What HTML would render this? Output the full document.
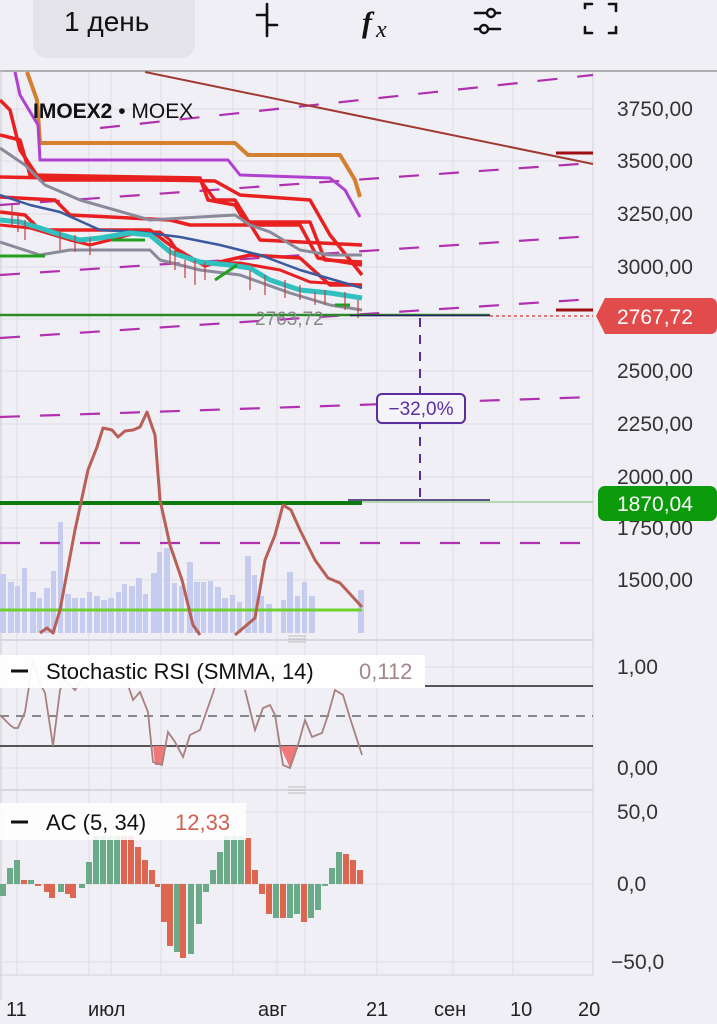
<!DOCTYPE html>
<html><head><meta charset="utf-8">
<style>
html,body{margin:0;padding:0;background:#f0eff5;width:717px;height:1024px;overflow:hidden;font-family:"Liberation Sans","DejaVu Sans",sans-serif;}
svg{position:absolute;left:0;top:0}
</style></head><body>
<svg width="717" height="1024" viewBox="0 0 717 1024" xmlns="http://www.w3.org/2000/svg" font-family="Liberation Sans, DejaVu Sans, sans-serif">
<rect width="717" height="1024" fill="#f0eff5"/>
<!-- top bar -->
<rect x="33" y="-12" width="162" height="70" rx="14" fill="#e4e3e9"/>
<text x="64" y="31" font-size="28" fill="#111">1 день</text>
<g stroke="#111" stroke-width="2.6" fill="none" stroke-linecap="round">
<path d="M257 15 H267 M267 4 V36 M267 25 H277"/>
<path d="M475 13 H500 M475 29 H500"/>
<path d="M585 8 V4 H592 M609 4 H616 V11 M585 27 V33 H592 M609 33 H616 V27"/>
</g>
<circle cx="491" cy="13" r="4" fill="#f0eff5" stroke="#111" stroke-width="2.4"/>
<circle cx="484" cy="29" r="4" fill="#f0eff5" stroke="#111" stroke-width="2.4"/>
<text x="362" y="32" font-size="30" font-style="italic" font-family="Liberation Serif, serif" font-weight="bold" fill="#111">f</text>
<text x="376" y="37" font-size="24" font-style="italic" font-family="Liberation Serif, serif" fill="#111">x</text>
<line x1="0" y1="71" x2="717" y2="71" stroke="#999" stroke-width="1.5"/>
<line x1="1" y1="71" x2="1" y2="1000" stroke="#ccc"/>

<!-- grid -->
<g stroke="#dcdce3" stroke-width="1">
<path d="M17 72V975 M89 72V975 M111 72V975 M161 72V975 M233 72V975 M277 72V975 M305 72V975 M377 72V975 M453 72V975 M513 72V975"/>
<path d="M0 109H593 M0 161H593 M0 214H593 M0 267H593 M0 319H593 M0 371H593 M0 424H593 M0 477H593 M0 528H593 M0 580H593"/>
<path d="M0 667H593 M0 768H593 M0 812H593 M0 884H593 M0 962H593"/>
</g>
<path d="M593 72V975 M0 975H593" stroke="#d0d0d6"/>
<path d="M0 640H593 M0 790H593" stroke="#cfcfd5" stroke-width="1.5"/>
<path d="M288 636H306 M288 639H306 M288 642H306 M288 787H306 M288 790H306 M288 793H306" stroke="#bbb"/>

<!-- volume -->
<g fill="#c6cbf0">
<rect x="0" y="574" width="6" height="59"/><rect x="8" y="582" width="6" height="51"/><rect x="15" y="586" width="5" height="47"/><rect x="22" y="568" width="5" height="65"/><rect x="30" y="592" width="6" height="41"/><rect x="37" y="598" width="5" height="35"/><rect x="44" y="588" width="6" height="45"/><rect x="51" y="571" width="5" height="62"/><rect x="58" y="522" width="5" height="111"/><rect x="65" y="594" width="6" height="39"/><rect x="72" y="598" width="6" height="35"/><rect x="80" y="598" width="5" height="35"/><rect x="87" y="592" width="5" height="41"/><rect x="94" y="596" width="6" height="37"/><rect x="101" y="600" width="6" height="33"/><rect x="108" y="598" width="6" height="35"/><rect x="116" y="592" width="5" height="41"/><rect x="122" y="584" width="5" height="49"/><rect x="129" y="586" width="6" height="47"/><rect x="136" y="578" width="6" height="55"/><rect x="143" y="594" width="5" height="39"/><rect x="151" y="573" width="6" height="60"/><rect x="157" y="552" width="5" height="81"/><rect x="164" y="548" width="6" height="85"/><rect x="172" y="583" width="5" height="50"/><rect x="179" y="586" width="5" height="47"/><rect x="187" y="562" width="6" height="71"/><rect x="194" y="582" width="6" height="51"/><rect x="201" y="582" width="5" height="51"/><rect x="208" y="581" width="5" height="52"/><rect x="215" y="587" width="6" height="46"/><rect x="222" y="598" width="6" height="35"/><rect x="230" y="595" width="5" height="38"/><rect x="237" y="602" width="5" height="31"/><rect x="245" y="556" width="6" height="77"/><rect x="252" y="575" width="5" height="58"/><rect x="259" y="596" width="5" height="37"/><rect x="266" y="604" width="6" height="29"/><rect x="281" y="600" width="5" height="33"/><rect x="287" y="572" width="6" height="61"/><rect x="295" y="596" width="5" height="37"/><rect x="302" y="582" width="5" height="51"/><rect x="309" y="596" width="6" height="37"/><rect x="358" y="590" width="6" height="43"/>
</g>

<!-- channel dashed -->
<g stroke="#b030b0" stroke-width="2.2" stroke-dasharray="20 20" fill="none">
<path d="M100 128 L593 75"/>
<path d="M0 205 L593 163"/>
<path d="M0 275 L593 236"/>
<path d="M0 338 L593 299"/>
<path d="M0 417 L593 397"/>
<path d="M0 543 H593"/>
</g>
<path d="M145 72 L593 164" stroke="#a03a30" stroke-width="2" fill="none"/>
<path d="M556 153H593 M556 310H593" stroke="#a01010" stroke-width="3"/>

<!-- price lines -->
<g fill="none" stroke-linejoin="round">
<path d="M27 72 L37 100 L40 143 L235 143 L248 155 L340 155 L355 180 L360 197" stroke="#d48030" stroke-width="4"/>
<path d="M15 72 L20 95 L38 125 L40 160 L228 160 L240 175 L330 178 L345 190 L360 217" stroke="#b040d0" stroke-width="3"/>
<path d="M0 100 L10 110 L20 150 L40 180 L200 180 L215 200 L235 200 L260 240 L362 245" stroke="#e82020" stroke-width="3.5"/>
<path d="M0 135 L20 140 L30 175 L200 178 L208 200 L235 205 L245 222 L310 222 L325 260 L362 262" stroke="#e82020" stroke-width="3.5"/>
<path d="M0 177 L215 181 L240 195 L310 200 L330 235 L362 275" stroke="#e82020" stroke-width="3.5"/>
<path d="M0 197 L55 200 L70 215 L170 220 L190 225 L300 225 L318 258 L362 265" stroke="#e82020" stroke-width="3.5"/>
<path d="M0 212 L25 215 L40 230 L150 230 L170 245 L195 260 L205 266 L215 263 L250 255 L300 258 L330 285 L362 285" stroke="#e82020" stroke-width="3.5"/>
<path d="M0 225 L30 228 L70 240 L90 245 L110 240 L140 232 L160 232 L170 240 L180 255 L195 262 L240 263 L280 270 L310 282 L362 285" stroke="#e82020" stroke-width="3"/>
<path d="M0 148 L25 165 L45 185 L80 200 L150 220 L200 217 L235 215 L250 225 L270 232 L300 250 L330 255 L362 255" stroke="#8a8a9a" stroke-width="3"/>
<path d="M0 242 L40 255 L70 250 L120 250 L150 250 L160 260 L200 270 L240 275 L290 293 L330 305 L362 310" stroke="#8a8a9a" stroke-width="3"/>
<path d="M0 195 L30 205 L60 212 L100 230 L140 232 L180 237 L220 245 L260 255 L300 270 L362 288" stroke="#3a5aa0" stroke-width="2.5"/>
<path d="M0 220 L20 222 L40 228 L55 233 L80 240 L100 238 L130 233 L150 235 L170 252 L200 262 L230 265 L250 268 L270 280 L300 290 L330 293 L362 298" stroke="#30c0c0" stroke-width="5"/>
<path d="M111 240 H145 M215 280 L237 265 M0 256 H45 M335 305H350" stroke="#20a020" stroke-width="3"/>
</g>
<g stroke="#c04040" stroke-width="1.2" fill="none">
<path d="M12 205V225 M18 215V232 M25 220V240 M60 230V250 M75 235V252 M90 238V255 M170 245V265 M175 250V270 M185 260V278 M195 260V285 M205 262V280 M250 270V290 M265 275V295 M285 280V298 M300 285V300 M315 292V305 M325 290V305 M345 292V310 M358 300V318"/>
</g>
<path d="M0 315 H490" stroke="#2a8a2a" stroke-width="2.5"/>
<path d="M350 315.5 H490" stroke="#2a2060" stroke-width="1.5"/>
<path d="M490 316 H593" stroke="#e05050" stroke-width="1.5" stroke-dasharray="3 3"/>
<text x="255" y="325" font-size="19" fill="#888">2763,72</text>
<text x="33" y="118" font-size="21" fill="#111"><tspan font-weight="bold">IMOEX2</tspan> • MOEX</text>

<!-- green levels -->
<path d="M0 503 H362" stroke="#0d7a0d" stroke-width="4"/>
<path d="M362 502 H593" stroke="#9fcf9f" stroke-width="1.5"/>
<path d="M348 500 H490" stroke="#2a2060" stroke-width="1.5"/>
<path d="M0 610 H362" stroke="#70d030" stroke-width="3"/>
<path d="M40 633 L47 628 L53 633 L60 610 L75 530 L88 470 L97 447 L103 428 L112 430 L118 437 L125 431 L133 430 L140 427 L147 412 L155 435 L160 500 L170 545 L182 580 L193 625 L200 635 M235 635 L255 618 L265 560 L275 535 L283 505 L291 510 L300 530 L315 560 L328 578 L340 583 L362 607" fill="none" stroke="#b86058" stroke-width="3" stroke-linejoin="round"/>
<path d="M420 318 V500" stroke="#5a2ea0" stroke-width="2" stroke-dasharray="9 8"/>
<rect x="377" y="394" width="88" height="29" rx="5" fill="#f5f4f9" stroke="#5a2ea0" stroke-width="2"/>
<text x="421" y="415" font-size="19" fill="#5a2ea0" text-anchor="middle">−32,0%</text>

<!-- price axis -->
<g font-size="21" fill="#333">
<text x="617" y="116">3750,00</text><text x="617" y="168">3500,00</text><text x="617" y="221">3250,00</text><text x="617" y="274">3000,00</text><text x="617" y="378">2500,00</text><text x="617" y="431">2250,00</text><text x="617" y="484">2000,00</text><text x="617" y="535">1750,00</text><text x="617" y="587">1500,00</text>
<text x="617" y="674">1,00</text><text x="617" y="775">0,00</text>
<text x="617" y="819">50,0</text><text x="617" y="891">0,0</text><text x="611" y="969">−50,0</text>
</g>
<path d="M605 298 H710 Q717 298 717 305 V327 Q717 334 710 334 H605 L596 316 Z" fill="#e24b4b"/>
<text x="617" y="324" font-size="21" fill="#fff">2767,72</text>
<rect x="598" y="486" width="119" height="35" rx="7" fill="#0a9a0a"/>
<text x="617" y="511" font-size="21" fill="#fff">1870,04</text>

<!-- stoch pane -->
<path d="M0 716 H593" stroke="#666" stroke-width="1.5" stroke-dasharray="9 7"/>
<path d="M0 746 H593 M425 686 H593" stroke="#222" stroke-width="1.5"/>
<path d="M153 746 L155 765 L162 765 L165 746Z M280 746 L290 768 L297 746Z" fill="#f07878"/>
<path d="M0 715 L5 720 L10 725 L14 728 L18 728 L25 712 L30 680 L33 660 L40 683 L45 693 L53 746 L60 690 L65 680 L75 690 L90 665 M128 685 L133 700 L140 692 L148 712 L153 762 L162 765 L168 732 L175 742 L183 757 L190 735 L200 730 L207 710 L213 693 L220 670 M245 690 L255 730 L263 708 L270 705 L275 715 L283 765 L290 768 L298 745 L305 720 L312 737 L322 733 L328 715 L335 690 L343 695 L350 718 L362 755" fill="none" stroke="#a88080" stroke-width="1.8"/>
<rect x="0" y="655" width="425" height="33" fill="#fff" opacity="0.93"/>
<path d="M11 671 H28" stroke="#111" stroke-width="3"/>
<text x="46" y="679" font-size="22" fill="#111">Stochastic RSI (SMMA, 14)</text>
<text x="359" y="679" font-size="22" fill="#a08888">0,112</text>

<!-- AC bars -->
<g>
<rect x="0" y="884" width="6" height="12" fill="#6aaa88"/><rect x="7" y="868" width="6" height="16" fill="#6aaa88"/><rect x="14" y="860" width="6" height="24" fill="#6aaa88"/><rect x="21" y="880" width="6" height="4" fill="#dd6650"/><rect x="28" y="880" width="6" height="4" fill="#6aaa88"/><rect x="35" y="884" width="6" height="2" fill="#dd6650"/><rect x="44" y="884" width="6" height="8" fill="#dd6650"/><rect x="49" y="884" width="6" height="14" fill="#dd6650"/><rect x="58" y="884" width="6" height="8" fill="#6aaa88"/><rect x="65" y="884" width="6" height="10" fill="#dd6650"/><rect x="70" y="884" width="6" height="14" fill="#dd6650"/><rect x="79" y="884" width="6" height="4" fill="#6aaa88"/><rect x="86" y="862" width="6" height="22" fill="#6aaa88"/><rect x="93" y="836" width="6" height="48" fill="#6aaa88"/><rect x="100" y="836" width="6" height="48" fill="#6aaa88"/><rect x="107" y="836" width="6" height="48" fill="#6aaa88"/><rect x="114" y="836" width="6" height="48" fill="#6aaa88"/><rect x="121" y="836" width="6" height="48" fill="#dd6650"/><rect x="128" y="836" width="6" height="48" fill="#dd6650"/><rect x="135" y="847" width="6" height="37" fill="#dd6650"/><rect x="142" y="860" width="6" height="24" fill="#dd6650"/><rect x="149" y="870" width="6" height="14" fill="#dd6650"/><rect x="155" y="884" width="5" height="3" fill="#dd6650"/><rect x="161" y="884" width="6" height="38" fill="#dd6650"/><rect x="167" y="884" width="6" height="62" fill="#dd6650"/><rect x="174" y="884" width="6" height="68" fill="#6aaa88"/><rect x="180" y="884" width="6" height="74" fill="#dd6650"/><rect x="188" y="884" width="6" height="70" fill="#6aaa88"/><rect x="196" y="884" width="6" height="40" fill="#6aaa88"/><rect x="203" y="884" width="6" height="8" fill="#6aaa88"/><rect x="210" y="870" width="6" height="14" fill="#6aaa88"/><rect x="217" y="852" width="6" height="32" fill="#6aaa88"/><rect x="224" y="836" width="6" height="48" fill="#6aaa88"/><rect x="231" y="836" width="6" height="48" fill="#6aaa88"/><rect x="238" y="836" width="6" height="48" fill="#6aaa88"/><rect x="245" y="838" width="6" height="46" fill="#dd6650"/><rect x="252" y="870" width="6" height="14" fill="#dd6650"/><rect x="259" y="884" width="6" height="10" fill="#dd6650"/><rect x="266" y="884" width="6" height="30" fill="#dd6650"/><rect x="273" y="884" width="6" height="34" fill="#6aaa88"/><rect x="280" y="884" width="6" height="34" fill="#dd6650"/><rect x="287" y="884" width="6" height="34" fill="#6aaa88"/><rect x="294" y="884" width="6" height="30" fill="#6aaa88"/><rect x="301" y="884" width="6" height="38" fill="#dd6650"/><rect x="308" y="884" width="6" height="34" fill="#6aaa88"/><rect x="315" y="884" width="6" height="26" fill="#6aaa88"/><rect x="322" y="884" width="6" height="2" fill="#6aaa88"/><rect x="329" y="868" width="6" height="16" fill="#6aaa88"/><rect x="336" y="852" width="6" height="32" fill="#6aaa88"/><rect x="343" y="854" width="6" height="30" fill="#dd6650"/><rect x="350" y="860" width="6" height="24" fill="#dd6650"/><rect x="357" y="870" width="6" height="14" fill="#dd6650"/>
</g>
<rect x="0" y="803" width="246" height="37" fill="#fff" opacity="0.88"/>
<path d="M11 822 H28" stroke="#111" stroke-width="3"/>
<text x="46" y="830" font-size="22" fill="#111">AC (5, 34)</text>
<text x="175" y="830" font-size="22" fill="#d06050">12,33</text>

<!-- time axis -->
<g font-size="20" fill="#222">
<text x="6" y="1016">11</text><text x="88" y="1016">июл</text><text x="258" y="1016">авг</text><text x="366" y="1016">21</text><text x="434" y="1016">сен</text><text x="510" y="1016">10</text><text x="578" y="1016">20</text>
</g>
</svg>
</body></html>
